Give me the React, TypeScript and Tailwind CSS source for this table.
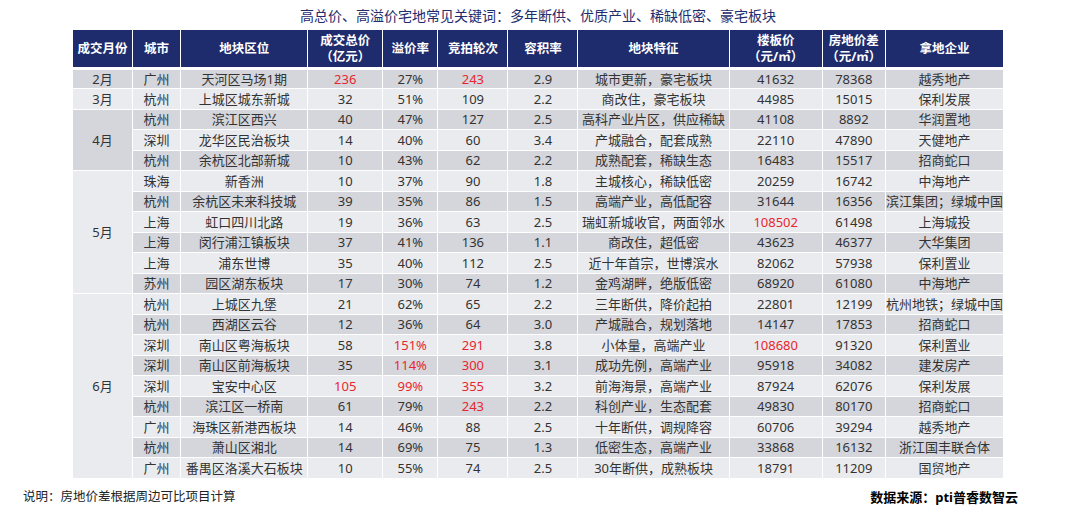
import React from 'react';

type Row = {
  city: string;
  area: string;
  total: string;
  rate: string;
  rounds: string;
  far: string;
  feature: string;
  floor: string;
  diff: string;
  firm: string;
  red?: string[];
};

const groups: { month: string; shade: 'dark' | 'light'; rows: Row[] }[] = [
  {
    month: '2月',
    shade: 'dark',
    rows: [
      { city: '广州', area: '天河区马场1期', total: '236', rate: '27%', rounds: '243', far: '2.9', feature: '城市更新，豪宅板块', floor: '41632', diff: '78368', firm: '越秀地产', red: ['total', 'rounds'] },
    ],
  },
  {
    month: '3月',
    shade: 'light',
    rows: [
      { city: '杭州', area: '上城区城东新城', total: '32', rate: '51%', rounds: '109', far: '2.2', feature: '商改住，豪宅板块', floor: '44985', diff: '15015', firm: '保利发展' },
    ],
  },
  {
    month: '4月',
    shade: 'dark',
    rows: [
      { city: '杭州', area: '滨江区西兴', total: '40', rate: '47%', rounds: '127', far: '2.5', feature: '高科产业片区，供应稀缺', floor: '41108', diff: '8892', firm: '华润置地' },
      { city: '深圳', area: '龙华区民治板块', total: '14', rate: '40%', rounds: '60', far: '3.4', feature: '产城融合，配套成熟', floor: '22110', diff: '47890', firm: '天健地产' },
      { city: '杭州', area: '余杭区北部新城', total: '10', rate: '43%', rounds: '62', far: '2.2', feature: '成熟配套，稀缺生态', floor: '16483', diff: '15517', firm: '招商蛇口' },
    ],
  },
  {
    month: '5月',
    shade: 'light',
    rows: [
      { city: '珠海', area: '新香洲', total: '10', rate: '37%', rounds: '90', far: '1.8', feature: '主城核心，稀缺低密', floor: '20259', diff: '16742', firm: '中海地产' },
      { city: '杭州', area: '余杭区未来科技城', total: '39', rate: '35%', rounds: '86', far: '1.5', feature: '高端产业，高低配容', floor: '31644', diff: '16356', firm: '滨江集团；绿城中国' },
      { city: '上海', area: '虹口四川北路', total: '19', rate: '36%', rounds: '63', far: '2.5', feature: '瑞虹新城收官，两面邻水', floor: '108502', diff: '61498', firm: '上海城投', red: ['floor'] },
      { city: '上海', area: '闵行浦江镇板块', total: '37', rate: '41%', rounds: '136', far: '1.1', feature: '商改住，超低密', floor: '43623', diff: '46377', firm: '大华集团' },
      { city: '上海', area: '浦东世博', total: '35', rate: '40%', rounds: '112', far: '2.5', feature: '近十年首宗，世博滨水', floor: '82062', diff: '57938', firm: '保利置业' },
      { city: '苏州', area: '园区湖东板块', total: '17', rate: '30%', rounds: '74', far: '1.2', feature: '金鸡湖畔，绝版低密', floor: '68920', diff: '61080', firm: '中海地产' },
    ],
  },
  {
    month: '6月',
    shade: 'light',
    rows: [
      { city: '杭州', area: '上城区九堡', total: '21', rate: '62%', rounds: '65', far: '2.2', feature: '三年断供，降价起拍', floor: '22801', diff: '12199', firm: '杭州地铁；绿城中国' },
      { city: '杭州', area: '西湖区云谷', total: '12', rate: '36%', rounds: '64', far: '3.0', feature: '产城融合，规划落地', floor: '14147', diff: '17853', firm: '招商蛇口' },
      { city: '深圳', area: '南山区粤海板块', total: '58', rate: '151%', rounds: '291', far: '3.8', feature: '小体量，高端产业', floor: '108680', diff: '91320', firm: '保利置业', red: ['rate', 'rounds', 'floor'] },
      { city: '深圳', area: '南山区前海板块', total: '35', rate: '114%', rounds: '300', far: '3.1', feature: '成功先例，高端产业', floor: '95918', diff: '34082', firm: '建发房产', red: ['rate', 'rounds'] },
      { city: '深圳', area: '宝安中心区', total: '105', rate: '99%', rounds: '355', far: '3.2', feature: '前海海景，高端产业', floor: '87924', diff: '62076', firm: '保利发展', red: ['total', 'rate', 'rounds'] },
      { city: '杭州', area: '滨江区一桥南', total: '61', rate: '79%', rounds: '243', far: '2.2', feature: '科创产业，生态配套', floor: '49830', diff: '80170', firm: '招商蛇口', red: ['rounds'] },
      { city: '广州', area: '海珠区新港西板块', total: '14', rate: '46%', rounds: '88', far: '2.5', feature: '十年断供，调规降容', floor: '60706', diff: '39294', firm: '越秀地产' },
      { city: '杭州', area: '萧山区湘北', total: '14', rate: '69%', rounds: '75', far: '1.3', feature: '低密生态，高端产业', floor: '33868', diff: '16132', firm: '浙江国丰联合体' },
      { city: '广州', area: '番禺区洛溪大石板块', total: '10', rate: '55%', rounds: '74', far: '2.5', feature: '30年断供，成熟板块', floor: '18791', diff: '11209', firm: '国贸地产' },
    ],
  },
];

const keys = ['city', 'area', 'total', 'rate', 'rounds', 'far', 'feature', 'floor', 'diff', 'firm'] as const;
const widths = [59, 47, 126, 74, 54, 69, 69, 150, 92, 62, 117];

const App: React.FC = () => {
  let index = 0;

  return (
    <div
      className="w-[1080px] h-[517px] bg-white text-[#333]"
      style={{ fontFamily: '"Noto Sans", "Noto Sans CJK SC", sans-serif' }}
    >
      <div className="ml-[72px] w-[932px] pt-[6px]">
        {/* Title */}
        <div className="h-[23px] text-center text-[14px] leading-[20px] text-[#1f2d6e]">
          高总价、高溢价宅地常见关键词：多年断供、优质产业、稀缺低密、豪宅板块
        </div>

        <table className="table-fixed w-[932px] border-separate border-spacing-px text-[13px]">
          <colgroup>
            {widths.map((w, i) => (
              <col key={i} style={{ width: w }} />
            ))}
          </colgroup>
          <thead>
            <tr className="bg-[#1e2b6c] text-white font-bold text-center text-[12.5px] leading-[16px]">
              <th className="h-[37px]">成交月份</th>
              <th>城市</th>
              <th>地块区位</th>
              <th>
                <div>成交总价</div>
                <div>（亿元）</div>
              </th>
              <th>溢价率</th>
              <th>竞拍轮次</th>
              <th>容积率</th>
              <th>地块特征</th>
              <th>
                <div>楼板价</div>
                <div>（元/㎡）</div>
              </th>
              <th>
                <div>房地价差</div>
                <div>（元/㎡）</div>
              </th>
              <th>拿地企业</th>
            </tr>
          </thead>
          <tbody>
            {groups.map((g) =>
              g.rows.map((r, ri) => {
                const shade = index % 2 === 0 ? 'bg-[#d5d6dc]' : 'bg-[#eaebee]';
                const first = index === 0;
                index++;
                return (
                  <tr key={g.month + ri} className="text-center leading-[18px]">
                    {ri === 0 && (
                      <td
                        rowSpan={g.rows.length}
                        className={`${g.shade === 'dark' ? 'bg-[#d5d6dc]' : 'bg-[#eaebee]'} ${first ? 'border-t-2 border-white' : ''}`}
                      >
                        {g.month}
                      </td>
                    )}
                    {keys.map((k) => (
                      <td
                        key={k}
                        className={`h-[19.5px] whitespace-nowrap ${shade} ${first ? 'border-t-2 border-white' : ''} ${
                          r.red?.includes(k) ? 'text-[#e8262d]' : ''
                        }`}
                      >
                        {r[k]}
                      </td>
                    ))}
                  </tr>
                );
              })
            )}
          </tbody>
        </table>
      </div>

      {/* Footer */}
      <div className="flex justify-between items-center pl-[23px] pr-[62px] mt-[9px]">
        <span className="text-[12.5px] text-[#222]">说明：房地价差根据周边可比项目计算</span>
        <span className="text-[13px] font-bold text-black">数据来源：pti普睿数智云</span>
      </div>
    </div>
  );
};

export default App;
